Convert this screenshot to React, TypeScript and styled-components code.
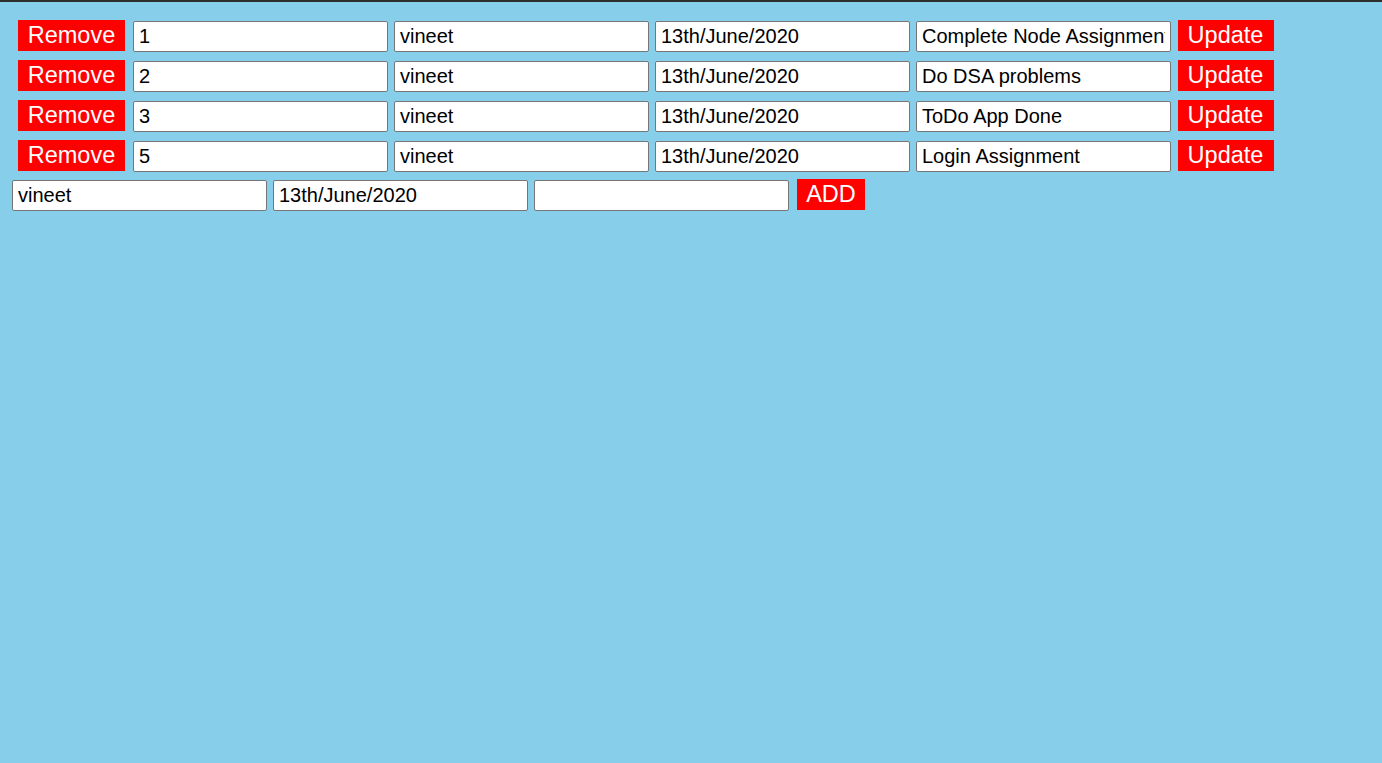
import React from "react";
import styled, { createGlobalStyle } from "styled-components";

const Global = createGlobalStyle`
  html, body { margin: 0; padding: 0; }
  body { background: #87ceeb; font-family: "Liberation Sans", Arial, sans-serif; }
`;

const Page = styled.div`
  min-height: 763px;
  box-sizing: border-box;
  border-top: 2px solid #2e2e2e;
  background: #87ceeb;
  padding: 18px 0 0 12px;
  display: flex;
  flex-direction: column;
  gap: 8px;
`;

const List = styled.div`
  display: flex;
  flex-direction: column;
  gap: 9px;
  margin-left: 6px;
`;

const Row = styled.div`
  display: flex;
  align-items: flex-start;
  height: 31px;
`;

const Field = styled.input<{ $gap?: number }>`
  box-sizing: border-box;
  width: 254.5px;
  height: 31px;
  margin: 1px ${(p) => p.$gap ?? 6.5}px 0 0;
  padding: 0 5px;
  border: 1px solid #767676;
  border-radius: 2px;
  background: #fff;
  color: #000;
  font-family: "Liberation Sans", Arial, sans-serif;
  font-size: 20px;
  outline: none;
`;

const Action = styled.button<{ $w: number }>`
  box-sizing: border-box;
  width: ${(p) => p.$w}px;
  height: 31px;
  margin: 0 8px 0 0;
  padding: 0;
  border: none;
  background: #ff0000;
  color: #fff;
  font-family: "Liberation Sans", Arial, sans-serif;
  font-size: 23.5px;
  line-height: 31px;
  cursor: pointer;
`;

const AddButton = styled(Action)`
  margin: 0 0 0 2px;
`;

const todos = [
  { id: "1", user: "vineet", date: "13th/June/2020", task: "Complete Node Assignment" },
  { id: "2", user: "vineet", date: "13th/June/2020", task: "Do DSA problems" },
  { id: "3", user: "vineet", date: "13th/June/2020", task: "ToDo App Done" },
  { id: "5", user: "vineet", date: "13th/June/2020", task: "Login Assignment" },
];

export default function App() {
  return (
    <>
      <Global />
      <Page>
        <List>
          {todos.map((t) => (
            <Row key={t.id}>
              <Action $w={107}>Remove</Action>
              <Field defaultValue={t.id} />
              <Field defaultValue={t.user} />
              <Field defaultValue={t.date} />
              <Field defaultValue={t.task} $gap={7} />
              <Action $w={96}>Update</Action>
            </Row>
          ))}
        </List>
        <Row>
          <Field defaultValue="vineet" />
          <Field defaultValue="13th/June/2020" />
          <Field defaultValue="" />
          <AddButton $w={68}>ADD</AddButton>
        </Row>
      </Page>
    </>
  );
}
